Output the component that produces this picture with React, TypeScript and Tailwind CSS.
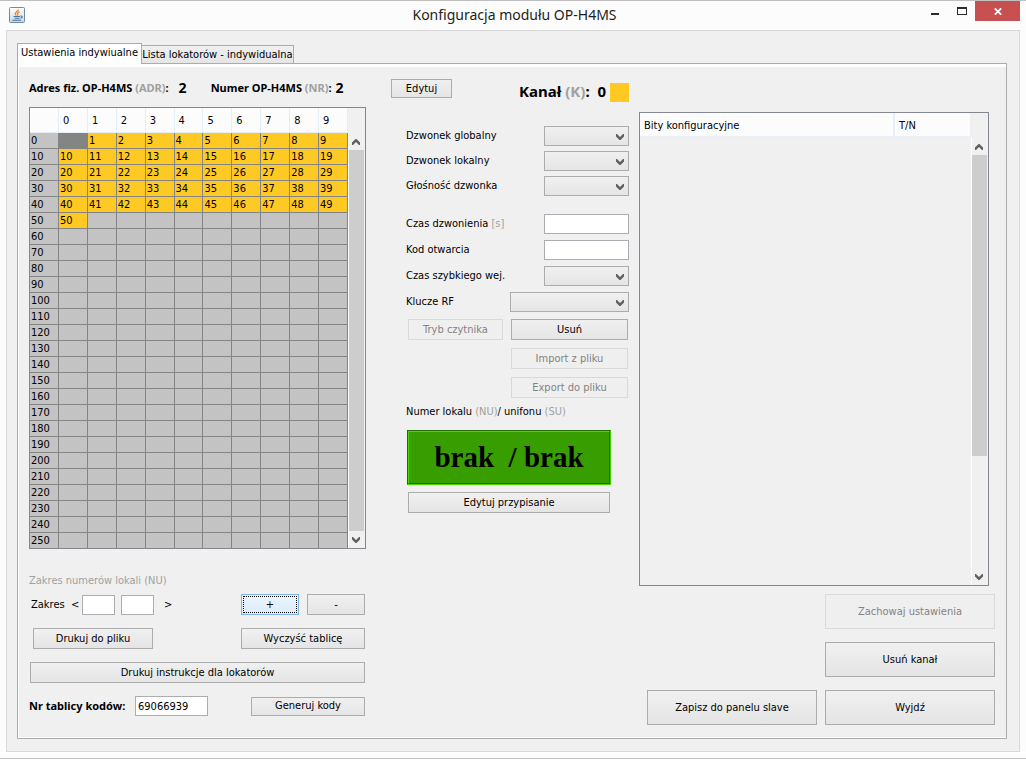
import React from "react";
import clsx from "clsx";

const COLUMNS = [0, 1, 2, 3, 4, 5, 6, 7, 8, 9];
const ROWS = Array.from({ length: 26 }, (_, i) => i * 10);
const LAST_USED = 50;

const Chevron = ({ up, className }: { up?: boolean; className?: string }) => (
  <svg
    viewBox="0 0 8 6"
    className={clsx("h-[6px] w-[8px]", up && "rotate-180", className)}
    aria-hidden="true"
  >
    <path d="M0 0h1l3 3 3-3h1v2.5L4.5 6h-1L0 2.5z" fill="#606060" />
  </svg>
);

const Button = ({
  children,
  className,
  disabled,
  focused,
}: {
  children: React.ReactNode;
  className?: string;
  disabled?: boolean;
  focused?: boolean;
}) => (
  <button
    type="button"
    disabled={disabled}
    className={clsx(
      "flex items-center justify-center border p-px whitespace-nowrap",
      disabled && "border-[#d9d9d9] bg-[#efefef] text-[#838383]",
      focused && "border-[#7eb4ea] bg-linear-to-b from-[#ecf4fc] to-[#dcecfc]",
      !disabled &&
        !focused &&
        "border-[#acacac] bg-linear-to-b from-[#f0f0f0] to-[#e5e5e5]",
      className
    )}
  >
    {focused ? (
      <span className="flex h-full w-full items-center justify-center border border-dotted border-black">
        {children}
      </span>
    ) : (
      children
    )}
  </button>
);

const Input = ({
  className,
  ...props
}: React.InputHTMLAttributes<HTMLInputElement>) => (
  <input
    type="text"
    className={clsx(
      "h-5 border border-[#abadb3] bg-white px-0.5 outline-none",
      className
    )}
    {...props}
  />
);

const Select = ({ id, className }: { id: string; className?: string }) => (
  <div className={clsx("relative h-5", className)}>
    <select
      id={id}
      className="h-full w-full appearance-none border border-[#acacac] bg-linear-to-b from-[#f0f0f0] to-[#e5e5e5] px-1 outline-none"
    >
      <option value=""></option>
    </select>
    <Chevron className="pointer-events-none absolute top-2 right-[5px]" />
  </div>
);

const Field = ({
  id,
  label,
  children,
}: {
  id: string;
  label: React.ReactNode;
  children: React.ReactNode;
}) => (
  <div className="flex items-center justify-between">
    <label htmlFor={id}>{label}</label>
    {children}
  </div>
);

const ScrollBar = ({ thumb }: { thumb: string }) => (
  <div className="flex min-h-0 flex-1 flex-col border-l border-white bg-[#f0f0f0]">
    <button
      type="button"
      aria-label="W górę"
      className="flex h-[17px] shrink-0 items-center justify-center pr-0.5"
    >
      <Chevron up />
    </button>
    <div className="mr-px min-h-0 flex-1">
      <div className={clsx("bg-[#cdcdcd]", thumb)} />
    </div>
    <button
      type="button"
      aria-label="W dół"
      className="flex h-[17px] shrink-0 items-center justify-center pr-0.5"
    >
      <Chevron />
    </button>
  </div>
);

const JavaIcon = () => (
  <svg viewBox="0 0 16 16" className="h-4 w-4" aria-hidden="true">
    <defs>
      <linearGradient id="java-bg" x1="0" y1="0" x2="0" y2="1">
        <stop offset="0" stopColor="#ffffff" />
        <stop offset="1" stopColor="#c9d5de" />
      </linearGradient>
    </defs>
    <rect
      x="0.5"
      y="0.5"
      width="15"
      height="15"
      rx="1"
      fill="url(#java-bg)"
      stroke="#6f8ba3"
    />
    <path
      d="M9.5 2.5C9.5 4 6.2 5 6.2 6.6c0 .8.6 1.2 1 1.9M10.7 4.7C8.6 5.6 8 6.3 8.7 7.2c.5.7.3 1-.2 1.5"
      fill="none"
      stroke="#ea7d24"
      strokeWidth="1.2"
    />
    <path
      d="M4.5 9.5H11M5.5 11.3h5M3.500 13.300H12M11.500 9c2.200-.4 2.200 1.800 0 2.300"
      fill="none"
      stroke="#44739c"
      strokeWidth="1.1"
    />
  </svg>
);

const TitleBar = () => (
  <header className="flex h-[29px] items-start">
    <div className="flex flex-1 pt-1.5 pl-[3px]">
      <JavaIcon />
    </div>
    <h1 className="pt-0.5 font-['Noto_Sans',sans-serif] text-[14px] leading-6 text-[#1e1e1e]">
      Konfiguracja modułu OP-H4MS
    </h1>
    <div className="flex flex-1 justify-end">
      <button
        type="button"
        aria-label="Minimalizuj"
        className="flex h-5 w-[27px] items-center justify-center"
      >
        <span className="mt-1.5 h-0.5 w-2 bg-[#2b2b2b]" />
      </button>
      <button
        type="button"
        aria-label="Maksymalizuj"
        className="flex h-5 w-[27px] items-center justify-center"
      >
        <span className="h-2 w-2.5 border border-t-2 border-[#2b2b2b]" />
      </button>
      <button
        type="button"
        aria-label="Zamknij"
        className="flex h-5 w-[45px] items-center justify-center bg-[#c75050]"
      >
        <svg viewBox="0 0 8 7" className="h-[7px] w-2" aria-hidden="true">
          <path d="M.8.3l6.400 6.400M7.200.3L.8 6.700" stroke="#fff" strokeWidth="1.7" />
        </svg>
      </button>
    </div>
  </header>
);

const NumbersTable = () => (
  <div className="flex border border-[#828790]">
    <table className="w-[318px] table-fixed border-separate border-spacing-0 bg-[#c3c3c3]">
      <thead>
        <tr className="h-[25px] bg-[#fcfcfc]">
          <th className="w-[29px] border-r border-b border-[#e5edf7]" />
          {COLUMNS.map((col) => (
            <th
              key={col}
              className="border-r border-b border-[#e5edf7] p-0 pt-0.5 pl-1 text-left font-normal"
            >
              {col}
            </th>
          ))}
        </tr>
      </thead>
      <tbody>
        {ROWS.map((row) => (
          <tr key={row} className="group leading-[15px]">
            <th className="border-r border-b border-[#848484] p-0 pl-px text-left font-normal group-last:border-b-0">
              {row}
            </th>
            {COLUMNS.map((col) => {
              const value = row + col;
              const used = value > 0 && value <= LAST_USED;
              return (
                <td
                  key={col}
                  className={clsx(
                    "border-r border-b border-[#848484] p-0 pl-px group-last:border-b-0",
                    used && "bg-[#ffc923]",
                    value === 0 && "bg-[#848484]"
                  )}
                >
                  {used ? value : ""}
                </td>
              );
            })}
          </tr>
        ))}
      </tbody>
    </table>
    <div className="flex w-[17px] flex-col pt-[25px]">
      <ScrollBar thumb="h-full" />
    </div>
  </div>
);

const DevicePanel = () => (
  <section className="flex flex-col">
    <div className="flex h-10 items-center pt-0.5 font-['Noto_Sans',sans-serif] font-bold">
      <span>
        Adres fiz. OP-H4MS <span className="text-[#a0a0a0]">(ADR)</span>:
      </span>
      <span className="ml-2.5 text-[14px]">2</span>
      <span className="ml-6">
        Numer OP-H4MS <span className="text-[#a0a0a0]">(NR)</span>:
      </span>
      <span className="ml-1 text-[14px]">2</span>
    </div>
    <NumbersTable />
    <p className="mt-6 leading-4 text-[#a0a0a0]">Zakres numerów lokali (NU)</p>
    <div className="mt-[5px] mr-px flex flex-col gap-[13px]">
      <div className="flex h-[21px] items-center">
        <label htmlFor="range-from" className="w-[53px] pl-0.5">
          Zakres &nbsp;&lt;
        </label>
        <Input id="range-from" className="w-[33px]" />
        <Input
          id="range-to"
          aria-label="Zakres do"
          className="ml-1.5 w-[33px]"
        />
        <span className="ml-2.5">&gt;</span>
        <Button focused className="ml-auto h-full w-[58px]">
          +
        </Button>
        <Button className="ml-2 h-full w-[58px]">-</Button>
      </div>
      <div className="flex h-[21px] justify-between pl-1">
        <Button className="w-[120px]">Drukuj do pliku</Button>
        <Button className="w-[124px]">Wyczyść tablicę</Button>
      </div>
      <Button className="ml-px h-[21px]">Drukuj instrukcje dla lokatorów</Button>
      <div className="flex h-5 items-center">
        <label
          htmlFor="board-number"
          className="w-[106px] font-['Noto_Sans',sans-serif] font-bold"
        >
          Nr tablicy kodów:
        </label>
        <Input
          id="board-number"
          defaultValue="69066939"
          className="w-[73px]"
        />
        <Button className="ml-auto h-[19px] w-[114px]">Generuj kody</Button>
      </div>
    </div>
  </section>
);

const ChannelPanel = () => (
  <section className="ml-[25px] flex flex-col pt-3">
    <div className="flex items-start justify-between">
      <Button className="h-[19px] w-[61px]">Edytuj</Button>
      <div className="flex items-center gap-1 pt-1 font-['Noto_Sans',sans-serif] text-[15px] leading-[19px] font-bold">
        <span className="-mt-0.5">
          Kanał <span className="text-[#a0a0a0]">(K)</span>:&nbsp; 0
        </span>
        <span className="h-[19px] w-[19px] bg-[#ffc923]" />
      </div>
    </div>
    <div className="mt-6 ml-[15px] flex flex-col">
      <div className="flex flex-col gap-[5px]">
        <Field id="ring-global" label="Dzwonek globalny">
          <Select id="ring-global" className="w-[85px]" />
        </Field>
        <Field id="ring-local" label="Dzwonek lokalny">
          <Select id="ring-local" className="w-[85px]" />
        </Field>
        <Field id="ring-volume" label="Głośność dzwonka">
          <Select id="ring-volume" className="w-[85px]" />
        </Field>
      </div>
      <div className="mt-[18px] flex flex-col gap-1.5">
        <Field
          id="ring-time"
          label={
            <>
              Czas dzwonienia <span className="text-[#a0a0a0]">[s]</span>
            </>
          }
        >
          <Input id="ring-time" className="w-[85px]" />
        </Field>
        <Field id="open-code" label="Kod otwarcia">
          <Input id="open-code" className="w-[85px]" />
        </Field>
        <Field id="fast-entry" label="Czas szybkiego wej.">
          <Select id="fast-entry" className="w-[85px]" />
        </Field>
        <Field id="rf-keys" label="Klucze RF">
          <Select id="rf-keys" className="w-[119px]" />
        </Field>
      </div>
      <div className="mt-[7px] mr-px ml-0.5 grid grid-cols-[95px_117px] justify-between gap-y-2">
        <Button disabled className="h-[21px]">
          Tryb czytnika
        </Button>
        <Button className="h-[21px]">Usuń</Button>
        <Button disabled className="col-start-2 h-[21px]">
          Import z pliku
        </Button>
        <Button disabled className="col-start-2 h-[21px]">
          Export do pliku
        </Button>
      </div>
      <p className="mt-1.5 leading-4">
        Numer lokalu <span className="text-[#a0a0a0]">(NU)</span>/ unifonu{" "}
        <span className="text-[#a0a0a0]">(SU)</span>
      </p>
      <div className="mt-2.5 ml-px w-[204px] border border-t-[#236b00] border-r-[#44d800] border-b-[#44d800] border-l-[#236b00]">
        <output className="block border border-t-[#44d800] border-r-[#236b00] border-b-[#236b00] border-l-[#44d800] bg-[#389e00] text-center font-['Liberation_Serif',serif] text-[29px] leading-[51px] font-bold whitespace-pre">
          brak{"  "}/ brak
        </output>
      </div>
      <Button className="mt-[7px] ml-0.5 h-[21px] w-[202px]">
        Edytuj przypisanie
      </Button>
    </div>
  </section>
);

const BitsPanel = () => (
  <section className="ml-2.5 flex flex-col pt-[45px]">
    <div className="mr-1.5 flex h-[474px] border border-[#828790]">
      <div className="flex-1">
        <table className="w-full table-fixed border-separate border-spacing-0">
          <thead>
            <tr className="h-6 bg-[#fcfcfc] text-left">
              <th className="border-r-2 border-b border-[#e8eff8] p-0 pt-0.5 pl-1 font-normal">
                Bity konfiguracyjne
              </th>
              <th className="w-[75px] border-b border-[#e8eff8] p-0 pt-0.5 pl-1 font-normal">
                T/N
              </th>
            </tr>
          </thead>
          <tbody />
        </table>
      </div>
      <div className="flex w-[18px] flex-col pt-[25px] pl-px">
        <ScrollBar thumb="h-[73%]" />
      </div>
    </div>
    <div className="mt-2 flex flex-col items-end gap-[13px]">
      <Button disabled className="h-[35px] w-[170px]">
        Zachowaj ustawienia
      </Button>
      <Button className="h-[35px] w-[170px]">Usuń kanał</Button>
      <div className="flex gap-2">
        <Button className="h-[35px] w-[170px]">Zapisz do panelu slave</Button>
        <Button className="h-[35px] w-[170px]">Wyjdź</Button>
      </div>
    </div>
  </section>
);

export default function App() {
  return (
    <div className="min-h-screen border-y border-[#c0c0c0] bg-[#fcfcfc] px-1.5 pb-1.5 font-['DejaVu_Sans_Condensed','DejaVu_Sans',sans-serif] text-[11px] leading-4 text-black">
      <TitleBar />
      <main className="border border-[#d9d9d9] bg-[#f0f0f0] pt-3 pr-3 pb-3 pl-2.5">
        <div role="tablist" className="flex items-end">
          <button
            type="button"
            role="tab"
            aria-selected="true"
            className="-mb-px h-[21px] w-[125px] border border-b-0 border-[#acacac] bg-white pb-0.5 whitespace-nowrap"
          >
            Ustawienia indywiualne
          </button>
          <button
            type="button"
            role="tab"
            aria-selected="false"
            className="h-[18px] w-[152px] border border-b-0 border-l-0 border-[#acacac] bg-linear-to-b from-[#f0f0f0] to-[#e5e5e5] whitespace-nowrap"
          >
            Lista lokatorów - indywidualna
          </button>
        </div>
        <div
          role="tabpanel"
          className="border border-[#acacac] bg-white pt-[3px] pb-px pl-px"
        >
          <div className="grid grid-cols-[337px_263px_minmax(0,1fr)] bg-[#f0f0f0] pr-[11px] pb-3 pl-2.5">
            <DevicePanel />
            <ChannelPanel />
            <BitsPanel />
          </div>
        </div>
      </main>
    </div>
  );
}
